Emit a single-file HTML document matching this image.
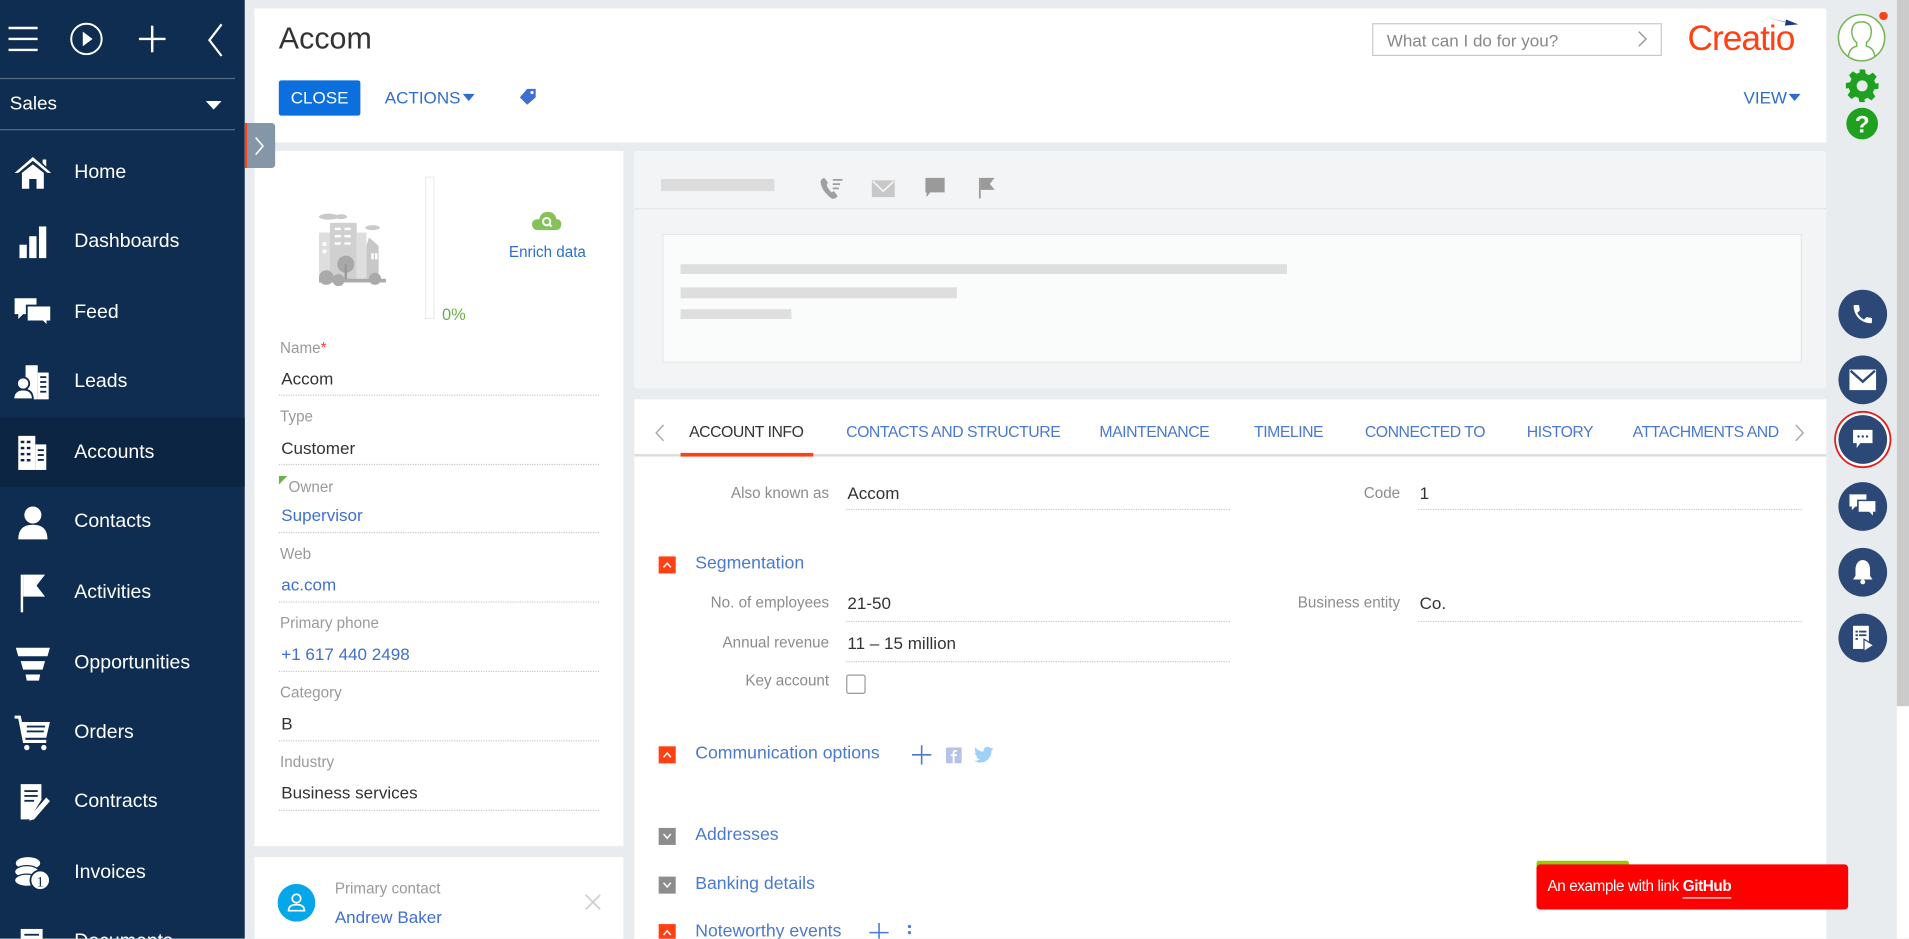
<!DOCTYPE html>
<html><head><meta charset="utf-8">
<style>
html,body{margin:0;padding:0;width:1909px;height:939px;overflow:hidden;background:#e9ecee;}
#w{position:absolute;left:0;top:0;width:1568px;height:771px;overflow:hidden;transform:scale(1.2175);transform-origin:0 0;font-family:"Liberation Sans",sans-serif;background:#e9ecee;}
.a{position:absolute;}
.sb{left:0;top:0;width:201px;height:771px;background:#0f2d50;}
.mi{position:absolute;left:0;width:201px;height:57px;color:#fff;font-size:16px;}
.mi span{position:absolute;left:61px;top:50%;transform:translateY(-50%);}
.mi svg{position:absolute;left:11px;top:50%;transform:translateY(-50%);}
.card{background:#fff;position:absolute;}
.lbl{position:absolute;left:230px;font-size:12.5px;color:#9a9a9a;}
.val{position:absolute;left:231px;font-size:14px;color:#333;}
.blue{color:#3f6fd0;}
.dl{position:absolute;height:0;border-top:1px dotted #c8c8c8;}
.tab{position:absolute;top:347px;font-size:13px;color:#4a79d1;letter-spacing:-0.4px;}
.fl{position:absolute;font-size:12.5px;color:#8c8c8c;text-align:right;}
.fv{position:absolute;font-size:14px;color:#333;}
.sq{position:absolute;left:541px;width:14px;height:14px;background:#ff4013;}
.sq.g{background:#8d8d8d;}
.st{position:absolute;left:571px;font-size:14.5px;color:#4a79d1;}
.rb{position:absolute;left:1510px;width:40px;height:40px;border-radius:50%;background:#2c4877;}
.rb svg{position:absolute;left:50%;top:50%;transform:translate(-50%,-50%);}
</style></head><body><div id="w">

<div class="a sb"></div>
<svg class="a" style="left:7px;top:21px" width="24" height="22"><g stroke="#fff" stroke-width="2"><line x1="0" y1="2" x2="24" y2="2"/><line x1="0" y1="11" x2="24" y2="11"/><line x1="0" y1="20" x2="24" y2="20"/></g></svg>
<svg class="a" style="left:57px;top:18px" width="28" height="28"><circle cx="14" cy="14" r="12.5" fill="none" stroke="#fff" stroke-width="1.6"/><path d="M11 8 L19 14 L11 20Z" fill="#fff"/></svg>
<svg class="a" style="left:114px;top:21px" width="22" height="22"><g stroke="#fff" stroke-width="2"><line x1="11" y1="0" x2="11" y2="22"/><line x1="0" y1="11" x2="22" y2="11"/></g></svg>
<svg class="a" style="left:170px;top:19px" width="14" height="28"><path d="M12 1 L2 14 L12 27" fill="none" stroke="#fff" stroke-width="1.8"/></svg>
<div class="a" style="left:0;top:64px;width:193px;height:1px;background:#566d8a"></div>
<div class="a" style="left:8px;top:77px;color:#fff;font-size:15.5px">Sales</div>
<svg class="a" style="left:169px;top:83px" width="13" height="7"><path d="M0 0H13L6.5 7Z" fill="#fff"/></svg>
<div class="a" style="left:0;top:106px;width:193px;height:1px;background:#566d8a"></div>

<div class="mi" style="top:113px"><svg width="32" height="28" viewBox="0 0 32 28"><path d="M16 1 L1 14 L4 14 L16 4 L28 14 L31 14 Z M7 14 V27 H13 V19 H19 V27 H25 V14 L16 7Z M24 3h3v6l-3-3z" fill="#fff"/></svg><span>Home</span></div>
<div class="mi" style="top:170px"><svg width="30" height="28"><rect x="5" y="16" width="6" height="11" fill="#fff"/><rect x="13" y="9" width="6" height="18" fill="#fff"/><rect x="21" y="1" width="6" height="26" fill="#fff"/></svg><span>Dashboards</span></div>
<div class="mi" style="top:228px"><svg width="32" height="28"><path d="M1 2H19V15H8L4 19V15H1Z" fill="#fff"/><path d="M11 8H31V21H28V25L24 21H11Z" fill="#fff" stroke="#0f2d50" stroke-width="1.5"/></svg><span>Feed</span></div>
<div class="mi" style="top:285px"><svg width="32" height="30"><rect x="10" y="1" width="10" height="28" fill="#fff"/><rect x="20" y="7" width="9" height="22" fill="#fff"/><g fill="#0f2d50"><rect x="22" y="10" width="5" height="1.5"/><rect x="22" y="14" width="5" height="1.5"/><rect x="22" y="18" width="5" height="1.5"/><rect x="22" y="22" width="5" height="1.5"/></g><circle cx="8" cy="16" r="5" fill="#fff" stroke="#0f2d50" stroke-width="1.5"/><path d="M0 29 Q0 21 8 21 Q16 21 16 29Z" fill="#fff" stroke="#0f2d50" stroke-width="1.5"/></svg><span>Leads</span></div>
<div class="mi" style="top:343px;background:#0b2542"><svg width="30" height="30"><rect x="4" y="1" width="14" height="28" fill="#fff"/><rect x="18" y="8" width="9" height="21" fill="#fff"/><g fill="#0b2542"><rect x="6" y="5" width="3" height="2"/><rect x="11" y="5" width="3" height="2"/><rect x="6" y="10" width="3" height="2"/><rect x="11" y="10" width="3" height="2"/><rect x="6" y="15" width="3" height="2"/><rect x="11" y="15" width="3" height="2"/><rect x="6" y="20" width="3" height="2"/><rect x="11" y="20" width="3" height="2"/><rect x="20" y="12" width="5" height="1.5"/><rect x="20" y="16" width="5" height="1.5"/><rect x="20" y="20" width="5" height="1.5"/></g></svg><span>Accounts</span></div>
<div class="mi" style="top:400px"><svg width="30" height="30"><circle cx="16" cy="9" r="7" fill="#fff"/><path d="M4 29 Q4 17 16 17 Q28 17 28 29Z" fill="#fff"/></svg><span>Contacts</span></div>
<div class="mi" style="top:458px"><svg width="30" height="32"><rect x="6" y="1" width="2" height="31" fill="#fff"/><path d="M8 1H26L19 10L26 19H8Z" fill="#fff"/></svg><span>Activities</span></div>
<div class="mi" style="top:516px"><svg width="32" height="30"><path d="M2 2H30L28 9H4Z M6 13H26L24 20H8Z M10 24H22L21 29H11Z" fill="#fff"/></svg><span>Opportunities</span></div>
<div class="mi" style="top:573px"><svg width="32" height="30"><path d="M1 2H5L9 22H27" fill="none" stroke="#fff" stroke-width="2.5"/><path d="M6 6H30L27 19H9Z" fill="#fff"/><g fill="#0f2d50"><rect x="11" y="9" width="15" height="1.5"/><rect x="11" y="13" width="14" height="1.5"/></g><circle cx="11" cy="27" r="2.2" fill="#fff"/><circle cx="25" cy="27" r="2.2" fill="#fff"/></svg><span>Orders</span></div>
<div class="mi" style="top:630px"><svg width="32" height="32"><path d="M6 1H23V14L13 30H6Z" fill="#fff"/><g fill="#0f2d50"><rect x="9" y="6" width="11" height="1.5"/><rect x="9" y="10" width="11" height="1.5"/><rect x="9" y="14" width="8" height="1.5"/></g><path d="M27 12L30 15L17 30L13 31L14 27Z" fill="#fff"/></svg><span>Contracts</span></div>
<div class="mi" style="top:688px"><svg width="32" height="32"><ellipse cx="12" cy="8" rx="10" ry="5" fill="#fff"/><ellipse cx="11" cy="15" rx="10" ry="5" fill="#fff" stroke="#0f2d50"/><ellipse cx="11" cy="22" rx="10" ry="5" fill="#fff" stroke="#0f2d50"/><circle cx="22" cy="22" r="8" fill="#fff" stroke="#0f2d50" stroke-width="1.5"/><text x="19" y="27" font-size="12" fill="#0f2d50" font-family="Liberation Serif">1</text></svg><span>Invoices</span></div>
<div class="mi" style="top:745px"><svg width="30" height="30"><rect x="6" y="4" width="18" height="26" fill="#fff"/><rect x="9" y="8" width="12" height="1.5" fill="#0f2d50"/></svg><span>Documents</span></div>

<div class="card" style="left:209px;top:7px;width:1291px;height:110px"></div>
<div class="a" style="left:229px;top:18px;font-size:25px;color:#333;font-weight:300">Accom</div>
<div class="a" style="left:229px;top:66px;width:67px;height:29px;background:#0b6fde;border-radius:2px;color:#fff;font-size:14px;line-height:29px;text-align:center">CLOSE</div>
<div class="a" style="left:316px;top:72px;color:#2f6dcc;font-size:14px">ACTIONS</div>
<svg class="a" style="left:380px;top:77px" width="10" height="6"><path d="M0 0H10L5 6Z" fill="#2f6dcc"/></svg>
<svg class="a" style="left:426px;top:72px" width="15" height="15"><path d="M7 1H14V8L7 14L1 8Z" fill="#3f6fd0"/><circle cx="11" cy="4" r="1.3" fill="#fff"/></svg>
<div class="a" style="left:1127px;top:19px;width:238px;height:27px;border:1px solid #c9c9c9;box-sizing:border-box"></div>
<div class="a" style="left:1139px;top:25px;font-size:14px;color:#888">What can I do for you?</div>
<svg class="a" style="left:1345px;top:25px" width="9" height="14"><path d="M1 1L7 7L1 13" fill="none" stroke="#999" stroke-width="1.2"/></svg>
<div class="a" style="left:1386px;top:16px;font-size:29px;color:#ff4013;letter-spacing:-0.8px">Creatio</div>
<svg class="a" style="left:1450px;top:13px" width="30" height="10"><path d="M0 1L25 7L15 5Z M17 3L27 7L16 8Z" fill="#1e3a78"/></svg>
<div class="a" style="left:1432px;top:72px;color:#2f6dcc;font-size:14px">VIEW</div>
<svg class="a" style="left:1469px;top:77px" width="10" height="6"><path d="M0 0H10L5 6Z" fill="#2f6dcc"/></svg>

<div class="a" style="left:1558px;top:0;width:10px;height:771px;background:#fff"></div>
<div class="a" style="left:1558px;top:0;width:10px;height:580px;background:#cbcbcb"></div>
<svg class="a" style="left:1508px;top:10px" width="44" height="44"><circle cx="21" cy="21" r="19" fill="#fff" stroke="#77b55a" stroke-width="1.3"/><path d="M10 37 Q11 29 17 28 V25 Q13 22 13 16 Q13 8 21 8 Q29 8 29 16 Q29 22 25 25 V28 Q31 29 32 37" fill="none" stroke="#77b55a" stroke-width="1.2"/><circle cx="39" cy="3" r="3.5" fill="#ff4013"/></svg>
<svg class="a" style="left:1516px;top:57px" width="27" height="27" viewBox="0 0 24 24"><path fill="#1fa11f" d="M10 0h4l.7 3.2 2.3 1 2.8-1.8 2.8 2.8-1.8 2.8 1 2.3L24 10v4l-3.2.7-1 2.3 1.8 2.8-2.8 2.8-2.8-1.8-2.3 1L14 24h-4l-.7-3.2-2.3-1-2.8 1.8-2.8-2.8 1.8-2.8-1-2.3L0 14v-4l3.2-.7 1-2.3L2.4 4.2l2.8-2.8L8 3.2l2.3-1Z"/><circle cx="12" cy="12" r="4" fill="#e9ecee"/></svg>
<svg class="a" style="left:1516px;top:88px" width="27" height="27"><circle cx="13.5" cy="13.5" r="13" fill="#1fa11f"/><text x="13.5" y="21" text-anchor="middle" font-size="20" font-weight="bold" fill="#fff" font-family="Liberation Sans">?</text></svg>
<div class="rb" style="top:238px"><svg width="20" height="20" viewBox="0 0 24 24"><path fill="#fff" d="M6.6 10.8c1.4 2.8 3.8 5.1 6.6 6.6l2.2-2.2c.3-.3.7-.4 1-.2 1.1.4 2.3.6 3.6.6.6 0 1 .4 1 1V20c0 .6-.4 1-1 1C10.6 21 3 13.4 3 4c0-.6.4-1 1-1h3.5c.6 0 1 .4 1 1 0 1.3.2 2.5.6 3.6.1.3 0 .7-.2 1z"/></svg></div>
<div class="rb" style="top:292px"><svg width="22" height="17"><rect x="0" y="0" width="22" height="17" fill="#fff"/><path d="M1 1L11 10L21 1" fill="none" stroke="#2c4877" stroke-width="2"/></svg></div>
<div class="rb" style="top:341px;box-shadow:0 0 0 2px #fff,0 0 0 3.5px #e02020"><svg width="16" height="16"><path d="M0 0H16V11H6L3 15V11H0Z" fill="#fff"/><g fill="#2c4877"><circle cx="4.5" cy="5.5" r="1"/><circle cx="8" cy="5.5" r="1"/><circle cx="11.5" cy="5.5" r="1"/></g></svg></div>
<div class="rb" style="top:396px"><svg width="22" height="20"><path d="M0 0H14V10H5L2 13V10H0Z" fill="#fff"/><path d="M7 5H22V15H20V19L16 15H7Z" fill="#fff" stroke="#2c4877" stroke-width="1.3"/></svg></div>
<div class="rb" style="top:450px"><svg width="18" height="22"><path d="M9 1C5 1 3 5 3 9V14L1 17H17L15 14V9C15 5 13 1 9 1Z" fill="#fff"/><circle cx="9" cy="19" r="2" fill="#fff"/></svg></div>
<div class="rb" style="top:504px"><svg width="20" height="22"><rect x="2" y="1" width="13" height="19" fill="#fff"/><g fill="#2c4877"><rect x="4" y="5" width="2" height="1.5"/><rect x="7" y="5" width="6" height="1.5"/><rect x="4" y="8" width="2" height="1.5"/><rect x="7" y="8" width="6" height="1.5"/><rect x="4" y="11" width="2" height="1.5"/></g><path d="M11 12L19 17L11 22Z" fill="#fff" stroke="#2c4877"/></svg></div>

<div class="card" style="left:209px;top:124px;width:303px;height:571px"></div>
<svg class="a" style="left:256px;top:173px" width="66" height="62"><g fill="#c9c9c9"><ellipse cx="14" cy="5" rx="8" ry="2.5"/><ellipse cx="24" cy="5" rx="5" ry="2"/><ellipse cx="50" cy="14" rx="6" ry="2"/></g><rect x="6" y="18" width="12" height="40" fill="#dedede"/><rect x="15" y="10" width="22" height="48" fill="#d0d0d0"/><rect x="37" y="18" width="8" height="40" fill="#dedede"/><path d="M47 22L55 29V58H45V29Z" fill="#c8c8c8"/><g fill="#fff"><rect x="19" y="14" width="5" height="2"/><rect x="27" y="14" width="5" height="2"/><rect x="19" y="20" width="5" height="2"/><rect x="27" y="20" width="5" height="2"/><rect x="19" y="26" width="5" height="2"/><rect x="27" y="26" width="5" height="2"/><rect x="9" y="26" width="3" height="3"/><rect x="9" y="32" width="3" height="3"/><rect x="49" y="35" width="2" height="5"/><rect x="52" y="35" width="2" height="5"/></g><circle cx="28" cy="44" r="7" fill="#a8a8a8"/><rect x="27" y="44" width="2" height="14" fill="#999"/><circle cx="12" cy="55" r="6" fill="#aaa"/><circle cx="22" cy="57" r="5" fill="#aaa"/><circle cx="52" cy="56" r="5" fill="#aaa"/><rect x="6" y="56" width="55" height="3" fill="#aaa"/></svg>
<div class="a" style="left:349px;top:145px;width:8px;height:117px;border:1px solid #ececec;box-sizing:border-box"></div>
<div class="a" style="left:363px;top:251px;font-size:13.5px;color:#6ab04c">0%</div>
<svg class="a" style="left:436px;top:172px" width="26" height="18"><path d="M6 17H20Q25 17 25 12Q25 8 21 8Q20 2 14 2Q8 2 7 8Q1 8 1 12Q1 17 6 17Z" fill="#86c15a"/><circle cx="13" cy="10" r="3" fill="none" stroke="#fff" stroke-width="1.6"/><path d="M15 12L17 14" stroke="#fff" stroke-width="1.8"/></svg>
<div class="a" style="left:418px;top:200px;font-size:12.5px;color:#2f6dcc">Enrich data</div>

<div class="lbl" style="top:279px">Name<span style="color:#e44">*</span></div>
<div class="val" style="top:303px">Accom</div><div class="dl" style="left:229px;top:324px;width:263px"></div>
<div class="lbl" style="top:335px">Type</div>
<div class="val" style="top:360px">Customer</div><div class="dl" style="left:229px;top:381px;width:263px"></div>
<svg class="a" style="left:229px;top:391px" width="7" height="7"><path d="M0 0H7L0 7Z" fill="#6ab04c"/></svg>
<div class="lbl" style="top:393px;left:237px">Owner</div>
<div class="val blue" style="top:415px">Supervisor</div><div class="dl" style="left:229px;top:437px;width:263px"></div>
<div class="lbl" style="top:448px">Web</div>
<div class="val blue" style="top:472px">ac.com</div><div class="dl" style="left:229px;top:494px;width:263px"></div>
<div class="lbl" style="top:505px">Primary phone</div>
<div class="val blue" style="top:529px">+1 617 440 2498</div><div class="dl" style="left:229px;top:551px;width:263px"></div>
<div class="lbl" style="top:562px">Category</div>
<div class="val" style="top:586px">B</div><div class="dl" style="left:229px;top:608px;width:263px"></div>
<div class="lbl" style="top:619px">Industry</div>
<div class="val" style="top:643px">Business services</div><div class="dl" style="left:229px;top:665px;width:263px"></div>

<div class="card" style="left:209px;top:704px;width:303px;height:80px"></div>
<svg class="a" style="left:228px;top:726px" width="31" height="31"><circle cx="15.5" cy="15.5" r="15.5" fill="#06a7e8"/><circle cx="15.5" cy="12" r="3.5" fill="none" stroke="#fff" stroke-width="1.4"/><path d="M9 22Q9 17 15.5 17Q22 17 22 22Z" fill="none" stroke="#fff" stroke-width="1.4"/></svg>
<div class="a" style="left:275px;top:723px;font-size:12.5px;color:#9a9a9a">Primary contact</div>
<div class="a" style="left:275px;top:745px;font-size:14px;color:#3f6fd0">Andrew Baker</div>
<svg class="a" style="left:480px;top:734px" width="14" height="14"><path d="M1 1L13 13M13 1L1 13" stroke="#ccc" stroke-width="1.3"/></svg>

<div class="a" style="left:201px;top:101px;width:25px;height:37px;background:#8596a8;border-radius:0 3px 3px 0;border-left:2px solid #ff4013;box-sizing:border-box"></div>
<svg class="a" style="left:208px;top:112px" width="10" height="16"><path d="M2 1L8 8L2 15" fill="none" stroke="#fff" stroke-width="1.3"/></svg>

<div class="a" style="left:521px;top:124px;width:979px;height:195px;background:#f3f4f6;border-radius:2px"></div>
<div class="a" style="left:521px;top:171px;width:979px;height:1px;background:#e2e4e6"></div>
<div class="a" style="left:543px;top:147px;width:93px;height:10px;background:#dcdcdc"></div>
<svg class="a" style="left:673px;top:145px" width="20" height="19"><path d="M4 1Q1 2 1 5Q2 12 10 18Q13 19 15 16L12 12L10 13Q7 10 6 7L7 5Z" fill="#a0a0a0"/><g fill="#a0a0a0"><rect x="11" y="2" width="8" height="1.5"/><rect x="11" y="5.5" width="6" height="1.5"/><rect x="11" y="9" width="5" height="1.5"/></g></svg>
<svg class="a" style="left:716px;top:148px" width="19" height="14"><rect width="19" height="14" fill="#c8c8c8"/><path d="M1 1L9.5 9L18 1" fill="none" stroke="#f3f4f6" stroke-width="1.4"/></svg>
<svg class="a" style="left:760px;top:146px" width="16" height="16"><path d="M0 0H16V12H4L1 16V12H0Z" fill="#9a9a9a"/></svg>
<svg class="a" style="left:804px;top:146px" width="14" height="17"><rect x="0" y="0" width="1.5" height="17" fill="#9a9a9a"/><path d="M1.5 0H13L9 5L13 10H1.5Z" fill="#9a9a9a"/></svg>
<div class="a" style="left:544px;top:192px;width:936px;height:106px;background:#fafbfb;border:1px solid #e6e7e8;box-sizing:border-box"></div>
<div class="a" style="left:559px;top:217px;width:498px;height:8px;background:#dedede"></div>
<div class="a" style="left:559px;top:236px;width:227px;height:9px;background:#dedede"></div>
<div class="a" style="left:559px;top:254px;width:91px;height:8px;background:#dedede"></div>

<div class="card" style="left:521px;top:328px;width:979px;height:460px"></div>
<svg class="a" style="left:538px;top:348px" width="9" height="15"><path d="M7 1L1 7.5L7 14" fill="none" stroke="#aaa" stroke-width="1.2"/></svg>
<div class="tab" style="left:566px;color:#333">ACCOUNT INFO</div>
<div class="tab" style="left:695px">CONTACTS AND STRUCTURE</div>
<div class="tab" style="left:903px">MAINTENANCE</div>
<div class="tab" style="left:1030px">TIMELINE</div>
<div class="tab" style="left:1121px">CONNECTED TO</div>
<div class="tab" style="left:1254px">HISTORY</div>
<div class="tab" style="left:1341px">ATTACHMENTS AND</div>
<svg class="a" style="left:1473px;top:348px" width="9" height="15"><path d="M2 1L8 7.5L2 14" fill="none" stroke="#aaa" stroke-width="1.2"/></svg>
<div class="a" style="left:521px;top:373px;width:979px;height:2px;background:#dcdcdc"></div>
<div class="a" style="left:559px;top:372px;width:109px;height:3px;background:#ff4013"></div>

<div class="fl" style="left:520px;width:161px;top:398px">Also known as</div>
<div class="fv" style="left:696px;top:397px">Accom</div><div class="dl" style="left:695px;top:418px;width:315px"></div>
<div class="fl" style="left:1000px;width:150px;top:398px">Code</div>
<div class="fv" style="left:1166px;top:397px">1</div><div class="dl" style="left:1165px;top:418px;width:315px"></div>

<div class="sq" style="top:457px"></div><svg class="a" style="left:544px;top:461px" width="8" height="6"><path d="M1 5L4 1.5L7 5" fill="none" stroke="#fff" stroke-width="1.2"/></svg>
<div class="st" style="top:455px">Segmentation</div>
<div class="fl" style="left:520px;width:161px;top:488px">No. of employees</div>
<div class="fv" style="left:696px;top:487px">21-50</div><div class="dl" style="left:695px;top:510px;width:315px"></div>
<div class="fl" style="left:1000px;width:150px;top:488px">Business entity</div>
<div class="fv" style="left:1166px;top:487px">Co.</div><div class="dl" style="left:1165px;top:510px;width:315px"></div>
<div class="fl" style="left:520px;width:161px;top:521px">Annual revenue</div>
<div class="fv" style="left:696px;top:520px">11 – 15 million</div><div class="dl" style="left:695px;top:543px;width:315px"></div>
<div class="fl" style="left:520px;width:161px;top:552px">Key account</div>
<div class="a" style="left:695px;top:554px;width:16px;height:16px;border:1.5px solid #9a9a9a;border-radius:2px;box-sizing:border-box"></div>

<div class="sq" style="top:613px"></div><svg class="a" style="left:544px;top:617px" width="8" height="6"><path d="M1 5L4 1.5L7 5" fill="none" stroke="#fff" stroke-width="1.2"/></svg>
<div class="st" style="top:611px">Communication options</div>
<svg class="a" style="left:749px;top:612px" width="16" height="16"><path d="M8 0V16M0 8H16" stroke="#4a79d1" stroke-width="1.3"/></svg>
<svg class="a" style="left:777px;top:614px" width="13" height="13"><rect width="13" height="13" rx="1" fill="#b5c3e6"/><path d="M7 13V7H9V5.5H7V4.5Q7 3.5 8 3.5H9V2H7.5Q5.5 2 5.5 4V5.5H4V7H5.5V13Z" fill="#fff"/></svg>
<svg class="a" style="left:800px;top:613px" width="16" height="14" viewBox="0 0 24 20"><path fill="#9fd0f5" d="M24 2.4c-.9.4-1.8.7-2.8.8 1-.6 1.8-1.6 2.2-2.7-1 .6-2 1-3.1 1.2C19.3.7 18 0 16.6 0c-2.7 0-4.9 2.2-4.9 4.9 0 .4 0 .8.1 1.1C7.7 5.8 4.1 3.9 1.7.9c-.4.7-.7 1.6-.7 2.5 0 1.7.9 3.2 2.2 4.1-.8 0-1.6-.2-2.2-.6v.1c0 2.4 1.7 4.4 3.9 4.8-.4.1-.8.2-1.3.2-.3 0-.6 0-.9-.1.6 2 2.4 3.4 4.6 3.4-1.7 1.3-3.8 2.1-6.1 2.1-.4 0-.8 0-1.2-.1C2.2 18.8 4.8 19.6 7.5 19.6c9.1 0 14-7.5 14-14v-.6c1-.7 1.8-1.6 2.5-2.6z"/></svg>

<div class="sq g" style="top:680px"></div><svg class="a" style="left:544px;top:684px" width="8" height="6"><path d="M1 1L4 4.5L7 1" fill="none" stroke="#fff" stroke-width="1.2"/></svg>
<div class="st" style="top:678px">Addresses</div>
<div class="sq g" style="top:720px"></div><svg class="a" style="left:544px;top:724px" width="8" height="6"><path d="M1 1L4 4.5L7 1" fill="none" stroke="#fff" stroke-width="1.2"/></svg>
<div class="st" style="top:718px">Banking details</div>
<div class="sq" style="top:759px"></div><svg class="a" style="left:544px;top:763px" width="8" height="6"><path d="M1 5L4 1.5L7 5" fill="none" stroke="#fff" stroke-width="1.2"/></svg>
<div class="st" style="top:757px">Noteworthy events</div>
<svg class="a" style="left:714px;top:758px" width="16" height="16"><path d="M8 0V16M0 8H16" stroke="#4a79d1" stroke-width="1.3"/></svg>
<svg class="a" style="left:745px;top:759px" width="4" height="14"><circle cx="2" cy="2" r="1.3" fill="#4a79d1"/><circle cx="2" cy="7" r="1.3" fill="#4a79d1"/></svg>

<div class="a" style="left:1262px;top:707px;width:76px;height:6px;background:#9cc800;border-radius:2px 2px 0 0"></div>
<div class="a" style="left:1262px;top:710px;width:256px;height:37px;background:#ff0000;border-radius:3px"></div>
<div class="a" style="left:1271px;top:721px;font-size:12.5px;color:#fff;letter-spacing:-0.3px">An example with link <b style="border-bottom:1px solid #fff;padding-bottom:2px">GitHub</b></div>

</div></body></html>
